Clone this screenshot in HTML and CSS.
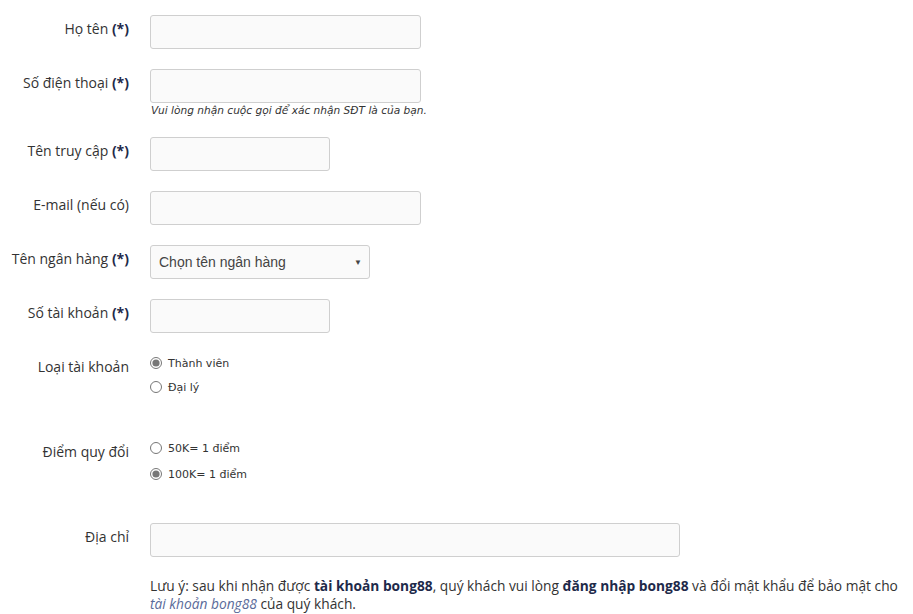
FILE: index.html
```html
<!DOCTYPE html>
<html lang="vi">
<head>
<meta charset="utf-8">
<title>Đăng ký</title>
<link rel="stylesheet" href="styles.css">
</head>
<body>
<form class="form">
  <div class="row">
    <label class="label">Họ tên <b>(*)</b></label>
    <div class="field"><input class="input w-lg" type="text"></div>
  </div>
  <div class="row">
    <label class="label">Số điện thoại <b>(*)</b></label>
    <div class="field">
      <input class="input w-lg" type="text">
      <div class="hint">Vui lòng nhận cuộc gọi để xác nhận SĐT là của bạn.</div>
    </div>
  </div>
  <div class="row">
    <label class="label">Tên truy cập <b>(*)</b></label>
    <div class="field"><input class="input w-sm" type="text"></div>
  </div>
  <div class="row">
    <label class="label">E-mail (nếu có)</label>
    <div class="field"><input class="input w-lg" type="text"></div>
  </div>
  <div class="row">
    <label class="label">Tên ngân hàng <b>(*)</b></label>
    <div class="field">
      <div class="select">
        <span>Chọn tên ngân hàng</span>
        <span class="caret">▼</span>
      </div>
    </div>
  </div>
  <div class="row">
    <label class="label">Số tài khoản <b>(*)</b></label>
    <div class="field"><input class="input w-sm" type="text"></div>
  </div>
  <div class="row row-radio">
    <label class="label label-radio">Loại tài khoản</label>
    <div class="field radios">
      <label class="radio"><input type="radio" name="loai" checked> Thành viên</label>
      <label class="radio"><input type="radio" name="loai"> Đại lý</label>
    </div>
  </div>
  <div class="row row-radio">
    <label class="label label-radio">Điểm quy đổi</label>
    <div class="field radios">
      <label class="radio"><input type="radio" name="diem"> 50K= 1 điểm</label>
      <label class="radio radio-tall"><input type="radio" name="diem" checked> 100K= 1 điểm</label>
    </div>
  </div>
  <div class="row">
    <label class="label">Địa chỉ</label>
    <div class="field"><input class="input w-xl" type="text"></div>
  </div>
  <div class="row row-note">
    <div></div>
    <p class="note">Lưu ý: sau khi nhận được <b>tài khoản bong88</b>, quý khách vui lòng <b>đăng nhập bong88</b> và đổi mật khẩu để bảo mật cho <i>tài khoản bong88</i> của quý khách.</p>
  </div>
</form>
</body>
</html>
```
FILE: styles.css
```css
html, body {
  margin: 0;
  padding: 0;
  background: #fff;
}
body {
  font-family: "Liberation Sans", Arial, sans-serif;
  font-size: 14px;
  color: #333;
}
.form {
  padding-top: 15px;
}
.row {
  display: grid;
  grid-template-columns: 130px 1fr;
  column-gap: 20px;
  margin-bottom: 20px;
}
.label {
  text-align: right;
  padding-top: 4px;
  padding-right: 1px;
  line-height: 20px;
  font-family: "Open Sans", sans-serif;
  font-size: 14px;
  color: #333;
}
.label b {
  color: #1e2a4a;
}
.field {
  display: flex;
  flex-direction: column;
  align-items: flex-start;
}
.input {
  box-sizing: border-box;
  height: 34px;
  border: 1px solid #cfcfcf;
  border-radius: 3px;
  background: #fafafa;
  margin: 0;
  padding: 0 8px;
}
.w-lg { width: 271px; }
.w-sm { width: 180px; }
.w-xl { width: 530px; }
.hint {
  font-family: "DejaVu Sans", Verdana, sans-serif;
  font-style: italic;
  font-size: 10.6px;
  line-height: 13px;
  margin-top: 1px;
  color: #333;
  margin-left: 1px;
}
.select {
  box-sizing: border-box;
  width: 220px;
  height: 34px;
  border: 1px solid #cfcfcf;
  border-radius: 3px;
  background: #fafafa;
  display: flex;
  align-items: center;
  justify-content: space-between;
  padding: 0 7px 0 8px;
  font-family: "Liberation Sans", Arial, sans-serif;
  font-size: 14px;
  color: #444;
}
.caret {
  font-size: 8px;
  color: #444;
}
.row-radio {
  margin-bottom: 39px;
}
.label-radio {
  padding-top: 4px;
}
.radios {
  margin-top: -2px;
}
.radio {
  display: flex;
  align-items: center;
  height: 24px;
  font-family: "DejaVu Sans", Verdana, sans-serif;
  font-size: 11px;
  color: #333;
}
.radio-tall {
  margin-top: 2px;
  margin-bottom: -2px;
}
.radio input {
  margin: 0 6px 0 0;
  width: 12px;
  height: 12px;
  accent-color: #777;
}
.row-note {
  margin-bottom: 0;
}
.note {
  margin: 0;
  padding: 0;
  max-width: 752px;
  font-family: "Open Sans", sans-serif;
  font-size: 13.75px;
  line-height: 18px;
  color: #333;
}
.note b {
  color: #1e2a4a;
}
.note i {
  color: #5a6b9a;
}
```
